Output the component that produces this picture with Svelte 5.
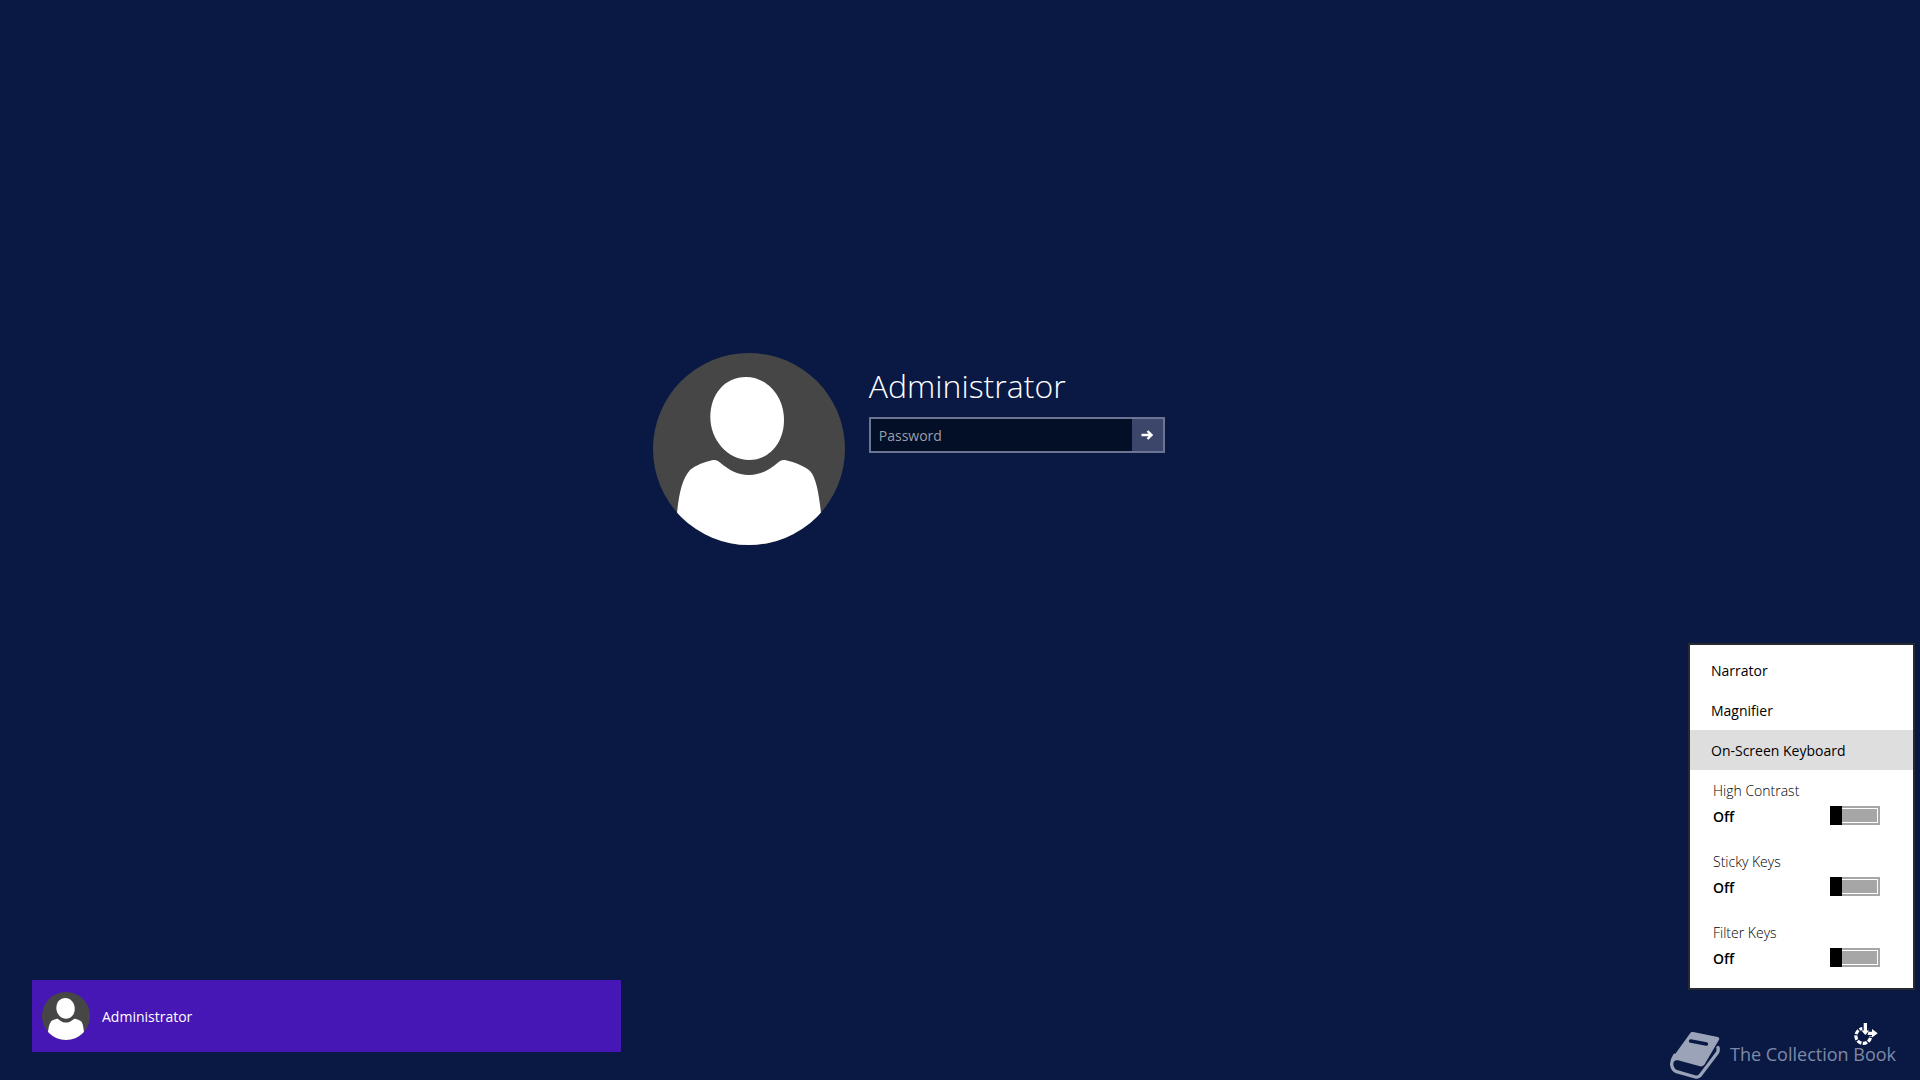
<script>
  let password = $state('');
  let settings = $state([
    { id: 'contrast', label: 'High Contrast', on: false },
    { id: 'sticky', label: 'Sticky Keys', on: false },
    { id: 'filter', label: 'Filter Keys', on: false }
  ]);
  const tools = ['Narrator', 'Magnifier', 'On-Screen Keyboard'];
  let active = $state('On-Screen Keyboard');
</script>

{#snippet avatar(id)}
  <svg class="avatar" viewBox="0 0 192 192" aria-hidden="true">
    <clipPath {id}><circle cx="96" cy="96" r="96" /></clipPath>
    <circle cx="96" cy="96" r="96" fill="#464646" />
    <g clip-path="url(#{id})" fill="#fff">
      <path d="M93 24C114 24 131 43 131 67C131 90 116 107 96 107C75 107 57.300 87 57.300 64C57.300 41 72 24 93 24Z" />
      <path d="M24 160C26 141 29 126 37 117C43 112 52 109 59 107.300C63 106.500 64.500 107.500 67 109.500C76 117 84 122 96 122C108 122 116 117 125 109.500C127.500 107.500 129 106.500 133 107.300C140 109 150 112 157 118C163 124 166 141 168 160V192H24Z" />
    </g>
  </svg>
{/snippet}

<main class="screen">
  <section class="login">
    <div class="portrait">{@render avatar('clip-large')}</div>
    <div class="credentials">
      <h1>Administrator</h1>
      <form class="password" onsubmit={(e) => e.preventDefault()}>
        <input type="password" placeholder="Password" aria-label="Password" bind:value={password} />
        <button type="submit" aria-label="Submit">
          <svg viewBox="0 0 12 10" aria-hidden="true">
            <path d="M0.500 5H10.500M6.500 1L10.500 5L6.500 9" fill="none" stroke="#fff" stroke-width="2.300" />
          </svg>
        </button>
      </form>
    </div>
  </section>

  <footer class="bottom">
    <button class="tile" type="button">
      <span class="thumb">{@render avatar('clip-small')}</span>
      <span>Administrator</span>
    </button>
    <div class="access">
      <button class="ease" type="button" aria-label="Ease of access">
        <svg viewBox="0 0 24 24" aria-hidden="true">
          <circle cx="9.300" cy="14" r="7.400" fill="none" stroke="#fff" stroke-width="3.200" stroke-dasharray="4.600 1.400" stroke-dashoffset="-2" pathLength="48" />
          <path d="M8.300 0H14.500V7H18V14H13L11.500 15L6.500 11V8.500H8.300Z" fill="#091944" />
          <path d="M9.700 1H13V8.500H15.200L11.300 13L7.400 8.500H9.700Z" fill="#fff" />
          <path d="M14.500 9.700H18V7L23.700 11.300L18 15.600V12.900H13.500Z" fill="#fff" />
        </svg>
      </button>

      <div class="menu">
        {#each tools as tool}
          <button class="tool" class:active={tool === active} type="button" onclick={() => (active = tool)}>{tool}</button>
        {/each}
        {#each settings as setting (setting.id)}
          <label class="setting">
            <span class="name">{setting.label}</span>
            <span class="row">
              <strong>{setting.on ? 'On' : 'Off'}</strong>
              <input type="checkbox" bind:checked={setting.on} />
            </span>
          </label>
        {/each}
      </div>
    </div>
  </footer>

  <div class="brand">
    <svg viewBox="18 18 150 144" aria-hidden="true">
      <path d="M79 21Q82 17 88 18L161 33Q168 35 165 41L122 115Q117 123 108 121L42 103Q34 101 31 106L22 108Q24 96 32 86Z" fill="#9ba3b9" />
      <path d="M32 88Q20 107 24 121Q27 133 38 137L94 153Q102 155 108 149L160 80Q164 74 162 65" fill="none" stroke="#9ba3b9" stroke-width="10" stroke-linecap="round" />
      <path d="M80 45L127 54" fill="none" stroke="#091944" stroke-width="11" stroke-linecap="round" />
    </svg>
    <span>The Collection Book</span>
  </div>
</main>

<style>
  :global(body) {
    margin: 0;
    background: #091944;
  }

  .screen {
    position: relative;
    box-sizing: border-box;
    display: flex;
    flex-direction: column;
    justify-content: space-between;
    min-height: 100vh;
    padding: 353px 42px 28px 32px;
    font-family: 'Open Sans', 'Noto Sans', sans-serif;
    font-size: 14px;
    color: #fff;
  }

  button,
  input {
    margin: 0;
    border: 0;
    border-radius: 0;
    font: inherit;
    color: inherit;
  }

  .avatar {
    display: block;
    width: 100%;
  }

  .login {
    display: flex;
    gap: 24px;
    margin-left: calc(34vw - 32px);
  }

  .portrait {
    width: 192px;
  }

  .credentials {
    width: 296px;
    padding-top: 8px;
  }

  h1 {
    margin: 0 0 6px;
    font-size: 32px;
    font-weight: 300;
    line-height: 50px;
  }

  .password {
    display: flex;
    box-sizing: border-box;
    height: 36px;
    border: 2px solid #6b7593;
  }

  .password input {
    flex: 1;
    min-width: 0;
    padding: 0 8px;
    background: #030e27;
    outline: 0;
  }

  .password input::placeholder {
    color: #9a9fab;
    opacity: 1;
  }

  .password button {
    display: grid;
    place-items: center;
    width: 31px;
    padding: 0;
    background: #3b466a;
  }

  .password svg {
    width: 12px;
  }

  .bottom {
    display: flex;
    justify-content: space-between;
    align-items: flex-start;
  }

  .tile {
    display: flex;
    align-items: center;
    gap: 12px;
    width: 589px;
    height: 72px;
    padding: 0 10px;
    background: #4617b4;
  }

  .thumb {
    width: 48px;
  }

  .ease {
    display: block;
    margin-top: 42px;
    padding: 0;
    background: none;
  }

  .ease svg {
    display: block;
    width: 24px;
  }

  .menu {
    position: absolute;
    right: 5px;
    bottom: 90px;
    box-sizing: border-box;
    width: 227px;
    padding: 5px 0;
    border: 2px solid #252a33;
    background: #fff;
    color: #000;
  }

  .tool {
    display: block;
    width: 100%;
    height: 40px;
    padding: 0 21px;
    background: none;
    text-align: left;
  }

  .tool.active {
    background: #dedede;
  }

  .setting {
    display: block;
    box-sizing: border-box;
    height: 71px;
    padding: 11px 33px 0 23px;
    line-height: 20px;
  }

  .name {
    display: block;
    font-weight: 300;
  }

  .row {
    display: flex;
    justify-content: space-between;
    align-items: flex-start;
    padding-top: 5px;
  }

  .row strong {
    padding-top: 1px;
    font-weight: 600;
  }

  .row input {
    appearance: none;
    display: flex;
    box-sizing: border-box;
    width: 50px;
    height: 19px;
    background: #a6a6a6;
    outline: 1px solid #fff;
    outline-offset: -3px;
  }

  .row input::before {
    content: '';
    position: relative;
    z-index: 1;
    width: 12px;
    height: 19px;
    background: #000;
  }

  .row input:checked {
    justify-content: flex-end;
  }

  .brand {
    position: absolute;
    right: 24px;
    bottom: 0;
    display: flex;
    align-items: center;
    gap: 10px;
    font-size: 18px;
    line-height: 24px;
    color: #7f89a6;
    pointer-events: none;
  }

  .brand svg {
    display: block;
    width: 50px;
  }

  .brand span {
    padding-bottom: 4px;
  }
</style>
